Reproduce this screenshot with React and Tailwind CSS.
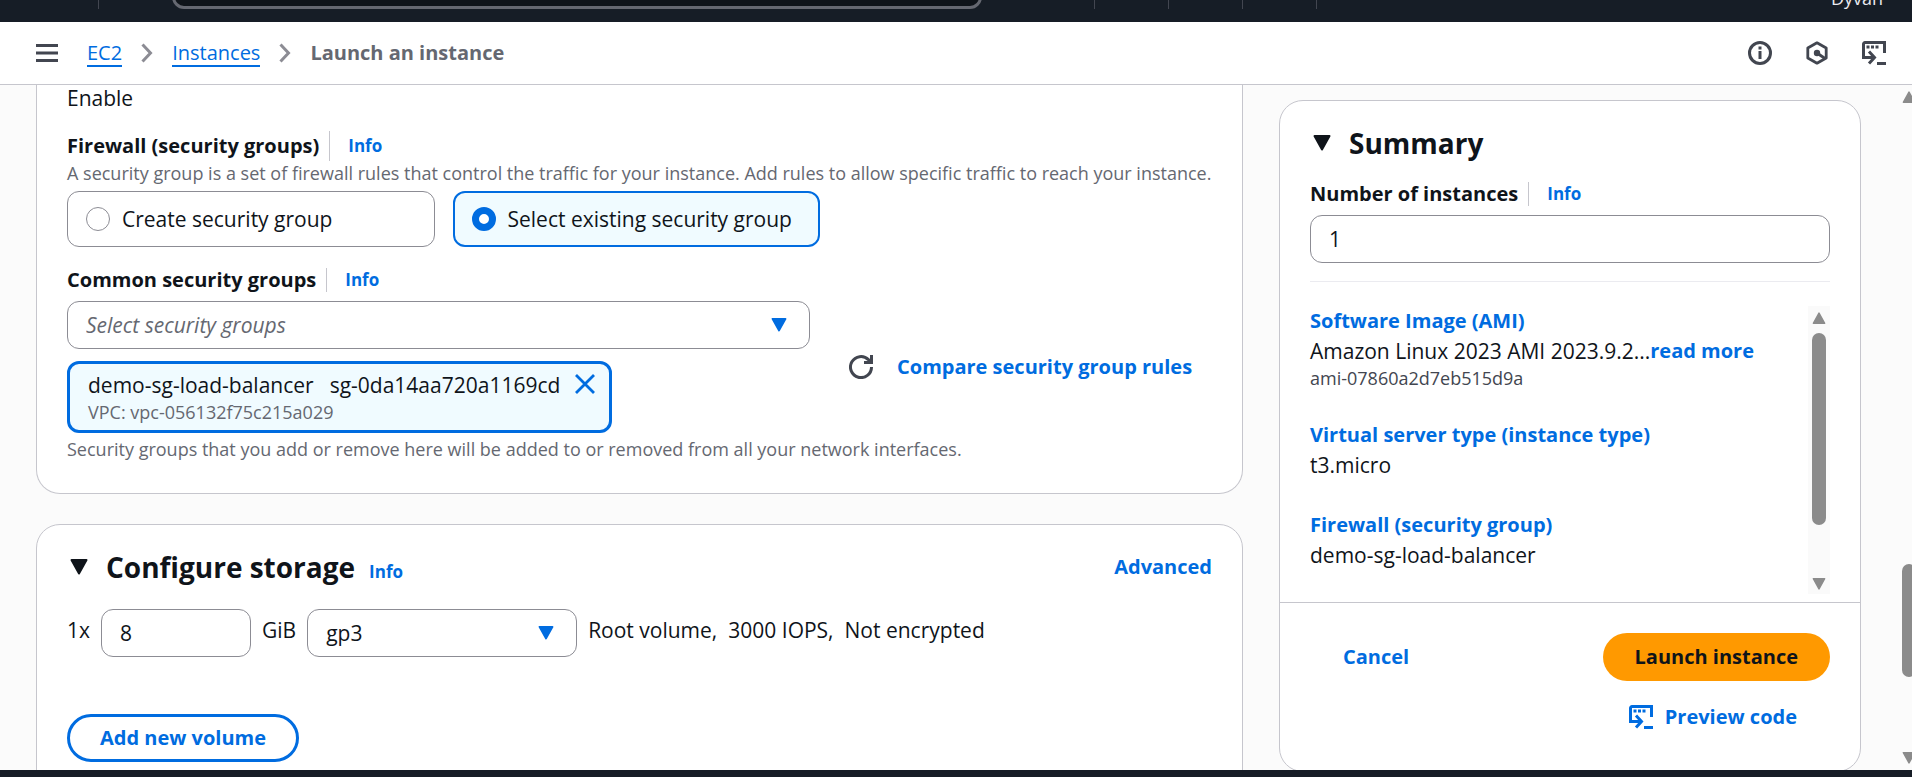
import React from "react";

const BOLD = "text-[20px] font-bold";
const LINK = "text-[20px] font-bold text-[#006ce0]";

function TriangleDown({ className }) {
  return (
    <svg viewBox="0 0 18 16" className={className} aria-hidden="true">
      <path
        d="M1.5 1h15L9 14.5z"
        fill="currentColor"
        stroke="currentColor"
        strokeWidth="2"
        strokeLinejoin="round"
      />
    </svg>
  );
}

function Chevron() {
  return (
    <svg viewBox="0 0 12 20" className="h-5 w-3 text-[#8c8c94]" fill="none" aria-hidden="true">
      <path d="M1.5 1.5l8 8.5-8 8.5" stroke="currentColor" strokeWidth="3" />
    </svg>
  );
}

function CodeIcon() {
  return (
    <svg viewBox="0 0 24 24" className="size-6" fill="none" aria-hidden="true">
      <path d="M12 16.500H1.500V3A1.500 1.500 0 0 1 3 1.500h19.500V12" stroke="currentColor" strokeWidth="3" />
      <path d="M7 10.500l5.500 6-5.500 6" stroke="currentColor" strokeWidth="3" />
      <path d="M15 22.500h9" stroke="currentColor" strokeWidth="3" />
      <path d="M4.500 6h3M9 6h3M13.500 6h3" stroke="currentColor" strokeWidth="3" />
    </svg>
  );
}

function InfoLink() {
  return (
    <a href="#info" className="text-[17px] leading-6 font-bold text-[#006ce0]">
      Info
    </a>
  );
}

function FieldLabel({ htmlFor, children, tall }) {
  return (
    <div className="flex h-[30px] items-center">
      <label htmlFor={htmlFor} className={BOLD}>
        {children}
      </label>
      <span className={`mr-[18px] ml-[10px] w-px bg-[#c6c6cd] ${tall ? "h-[30px]" : "h-6"}`} />
      <InfoLink />
    </div>
  );
}

function RadioTile({ label, checked }) {
  return (
    <label
      className={`flex h-14 flex-1 items-center gap-3 rounded-xl ${
        checked ? "border-2 border-[#006ce0] bg-[#f0fbff] px-[17px]" : "border border-[#8c8c94] px-[18px]"
      }`}
    >
      <input
        type="radio"
        name="security-group-mode"
        defaultChecked={checked}
        className="size-6 shrink-0 appearance-none rounded-full border border-[#8c8c94] bg-white checked:border-[7px] checked:border-[#006ce0]"
      />
      {label}
    </label>
  );
}

function Select({ id, label, className, options, placeholder }) {
  return (
    <div className={`relative ${className}`}>
      <select
        id={id}
        aria-label={label}
        className={`block h-12 w-full appearance-none rounded-xl border border-[#8c8c94] bg-white px-[18px] ${
          placeholder ? "text-[#656871] italic" : ""
        }`}
      >
        {options.map((option) => (
          <option key={option}>{option}</option>
        ))}
      </select>
      <TriangleDown className="pointer-events-none absolute top-[17px] right-[23px] h-[14px] w-4 text-[#006ce0]" />
    </div>
  );
}

function TopBar() {
  return (
    <header className="flex h-[22px] shrink-0 items-end overflow-hidden bg-[#161d26] pb-[13px]">
      <div className="flex w-[172px] shrink-0 items-end pl-[98px]">
        <span className="h-8 w-px bg-[#424650]" />
      </div>
      <input
        type="search"
        aria-label="Search"
        className="h-12 w-[810px] rounded-xl border-[3px] border-[#656871] bg-[#0f141a]"
      />
      <div className="ml-[112px] flex items-end gap-[73px]">
        <span className="h-8 w-px bg-[#424650]" />
        <span className="h-8 w-px bg-[#424650]" />
        <span className="h-8 w-px bg-[#424650]" />
        <span className="h-8 w-px bg-[#424650]" />
      </div>
      <span className="-mb-px ml-auto pr-[29px] text-[18px] leading-6 text-[#ebebf0]">Dyvan</span>
    </header>
  );
}

function NavBar() {
  return (
    <nav className="flex h-[63px] shrink-0 items-center border-b border-[#c6c6cd] bg-white pr-[26px] pl-9">
      <button type="button" aria-label="Open navigation" className="text-[#424650]">
        <svg viewBox="0 0 22 18" className="h-[18px] w-[22px]" aria-hidden="true">
          <path d="M0 1.500h22M0 9h22M0 16.500h22" stroke="currentColor" strokeWidth="3" />
        </svg>
      </button>
      <div className="ml-[29px] flex items-center gap-[19px] text-[20px]">
        <a href="#ec2" className="border-b-2 border-[#006ce0] pt-0.5 leading-6 text-[#006ce0]">EC2</a>
        <Chevron />
        <a href="#instances" className="border-b-2 border-[#006ce0] pt-0.5 leading-6 text-[#006ce0]">Instances</a>
        <Chevron />
        <span className={`text-[#656871] ${BOLD}`}>Launch an instance</span>
      </div>
      <div className="ml-auto flex items-center gap-[33px] text-[#424650]">
        <button type="button" aria-label="Info panel">
          <svg viewBox="0 0 24 24" className="size-6" fill="none" aria-hidden="true">
            <circle cx="12" cy="12" r="10.500" stroke="currentColor" strokeWidth="3" />
            <path d="M12 10v8M12 5.500v3" stroke="currentColor" strokeWidth="3" />
          </svg>
        </button>
        <button type="button" aria-label="Settings">
          <svg viewBox="0 0 24 24" className="size-6" fill="none" aria-hidden="true">
            <path d="M12 1.800l9.200 5.200v10L12 22.200 2.800 17V7z" stroke="currentColor" strokeWidth="2.800" strokeLinejoin="round" />
            <circle cx="12" cy="12" r="3.200" fill="currentColor" />
            <path d="M12 12l8 5.500" stroke="currentColor" strokeWidth="2.800" />
          </svg>
        </button>
        <button type="button" aria-label="CloudShell">
          <CodeIcon />
        </button>
      </div>
    </nav>
  );
}

function NetworkCard() {
  return (
    <section className="rounded-b-3xl border-x border-b border-[#c6c6cd] bg-white px-[30px] pb-8">
      <p className="leading-[26px]">Enable</p>
      <div className="mt-5">
        <FieldLabel tall>Firewall (security groups)</FieldLabel>
      </div>
      <p className="text-[18px] leading-6 whitespace-nowrap text-[#656871]">
        A security group is a set of firewall rules that control the traffic for your instance. Add rules to allow
        specific traffic to reach your instance.
      </p>
      <div className="mt-1.5 flex w-[753px] gap-[18px]">
        <RadioTile label="Create security group" />
        <RadioTile label="Select existing security group" checked />
      </div>
      <div className="mt-[18px]">
        <FieldLabel htmlFor="security-groups">Common security groups</FieldLabel>
      </div>
      <div className="mt-1.5 flex items-center">
        <div className="w-[743px]">
          <Select id="security-groups" options={["Select security groups"]} placeholder />
          <div className="mt-3 flex h-[72px] w-[545px] justify-between rounded-xl border-[3px] border-[#006ce0] bg-[#f0fbff] pt-1.5 pr-3.5 pl-[18px]">
            <div>
              <div className="flex gap-4 leading-[30px]">
                <span>demo-sg-load-balancer</span>
                <span>sg-0da14aa720a1169cd</span>
              </div>
              <div className="text-[18px] leading-6 text-[#656871]">VPC: vpc-056132f75c215a029</div>
            </div>
            <button type="button" aria-label="Remove security group" className="mt-1 h-5 w-5 text-[#006ce0]">
              <svg viewBox="0 0 20 20" className="size-5" aria-hidden="true">
                <path d="M1 1l18 18M19 1L1 19" stroke="currentColor" strokeWidth="2.800" />
              </svg>
            </button>
          </div>
        </div>
        <button type="button" aria-label="Refresh" className="ml-[39px] text-[#424650]">
          <svg viewBox="0 0 24 24" className="size-6" fill="none" aria-hidden="true">
            <path d="M22.500 12a10.500 10.500 0 1 1-3.100-7.400L22 7.500" stroke="currentColor" strokeWidth="3" />
            <path d="M22.500 0v7.500H15" stroke="currentColor" strokeWidth="3" />
          </svg>
        </button>
        <a href="#compare" className={`ml-6 ${LINK}`}>
          Compare security group rules
        </a>
      </div>
      <p className="mt-1 text-[18px] leading-6 text-[#656871]">
        Security groups that you add or remove here will be added to or removed from all your network interfaces.
      </p>
    </section>
  );
}

function StorageCard() {
  return (
    <section className="mt-[30px] rounded-t-3xl border border-[#c6c6cd] bg-white px-[30px] pt-6 pb-[30px]">
      <div className="flex items-center">
        <TriangleDown className="ml-[3px] h-4 w-[18px]" />
        <div className="ml-[18px] flex items-baseline gap-3.5">
          <h2 className="text-[28px] leading-9 font-bold">Configure storage</h2>
          <InfoLink />
        </div>
        <a href="#advanced" className={`ml-auto ${LINK}`}>
          Advanced
        </a>
      </div>
      <div className="mt-6 flex gap-[11px] leading-[42px]">
        <label htmlFor="volume-size">1x</label>
        <input
          id="volume-size"
          type="text"
          defaultValue="8"
          className="h-12 w-[150px] rounded-xl border border-[#8c8c94] px-[18px]"
        />
        <span>GiB</span>
        <Select id="volume-type" label="Volume type" options={["gp3"]} className="w-[270px]" />
        <span>Root volume,</span>
        <span>3000 IOPS,</span>
        <span>Not encrypted</span>
      </div>
      <button type="button" className={`mt-[57px] h-12 rounded-full border-[3px] border-[#006ce0] px-[30px] ${LINK}`}>
        Add new volume
      </button>
    </section>
  );
}

function SummaryItem({ title, children }) {
  return (
    <div>
      <dt className="flex">
        <a href="#section" className={`leading-[30px] ${LINK}`}>
          {title}
        </a>
      </dt>
      {children}
    </div>
  );
}

function SummaryCard() {
  return (
    <aside className="mt-[15px] w-[582px] shrink-0 self-start rounded-3xl border border-[#c6c6cd] bg-white">
      <div className="px-[30px] pt-6 pb-2">
        <div className="flex items-center">
          <TriangleDown className="ml-[3px] h-4 w-[18px]" />
          <h2 className="ml-[18px] text-[28px] leading-9 font-bold">Summary</h2>
        </div>
        <div className="mt-[18px]">
          <FieldLabel htmlFor="instance-count">Number of instances</FieldLabel>
        </div>
        <input
          id="instance-count"
          type="text"
          defaultValue="1"
          className="mt-1.5 block h-12 w-full rounded-xl border border-[#8c8c94] px-[18px]"
        />
        <hr className="mt-[18px] border-[#ebebf0]" />
        <div className="mt-6 flex h-72">
          <dl className="flex flex-1 flex-col gap-[30px]">
            <SummaryItem title="Software Image (AMI)">
              <dd className="flex">
                <span>Amazon Linux 2023 AMI 2023.9.2...</span>
                <a href="#more" className={LINK}>
                  read more
                </a>
              </dd>
              <dd className="text-[18px] leading-6 text-[#424650]">ami-07860a2d7eb515d9a</dd>
            </SummaryItem>
            <SummaryItem title="Virtual server type (instance type)">
              <dd>t3.micro</dd>
            </SummaryItem>
            <SummaryItem title="Firewall (security group)">
              <dd>demo-sg-load-balancer</dd>
            </SummaryItem>
          </dl>
          <div className="flex w-[22px] flex-col items-center bg-[#fafafa] pt-1.5 pb-1 text-[#8b8b8b]" aria-hidden="true">
            <TriangleDown className="h-3 w-[14px] rotate-180" />
            <div className="mt-[9px] h-48 w-[14px] rounded-full bg-[#8b8b8b]" />
            <TriangleDown className="mt-auto h-3 w-[14px]" />
          </div>
        </div>
      </div>
      <div className="border-t border-[#c6c6cd] p-[30px]">
        <div className="flex items-center justify-between">
          <button type="button" className={`h-12 px-[33px] ${LINK}`}>
            Cancel
          </button>
          <button type="button" className={`h-12 rounded-full bg-[#ff9900] px-8 ${BOLD}`}>
            Launch instance
          </button>
        </div>
        <div className="mt-3 flex justify-end">
          <button type="button" className={`flex h-12 items-center gap-3 pr-[33px] ${LINK}`}>
            <CodeIcon />
            Preview code
          </button>
        </div>
      </div>
    </aside>
  );
}

export default function App() {
  return (
    <div className="flex h-screen flex-col overflow-hidden bg-[#fbfbfb] font-['Open_Sans',sans-serif] text-[21px] leading-[30px] text-[#0f141a]">
      <TopBar />
      <NavBar />
      <div className="flex min-h-0 flex-1 overflow-hidden">
        <main className="flex min-w-0 flex-1 gap-9 pr-[41px] pl-9">
          <div className="min-w-0 flex-1">
            <NetworkCard />
            <StorageCard />
          </div>
          <SummaryCard />
        </main>
        <div className="flex w-[10px] flex-col overflow-hidden py-1.5 text-[#8b8b8b]" aria-hidden="true">
          <TriangleDown className="h-3 w-[14px] shrink-0 rotate-180" />
          <div className="mt-auto h-[113px] w-[14px] shrink-0 rounded-full bg-[#8b8b8b]" />
          <TriangleDown className="mt-[75px] h-3 w-[14px] shrink-0" />
        </div>
      </div>
      <footer className="h-[7px] shrink-0 bg-[#161d26]" />
    </div>
  );
}
